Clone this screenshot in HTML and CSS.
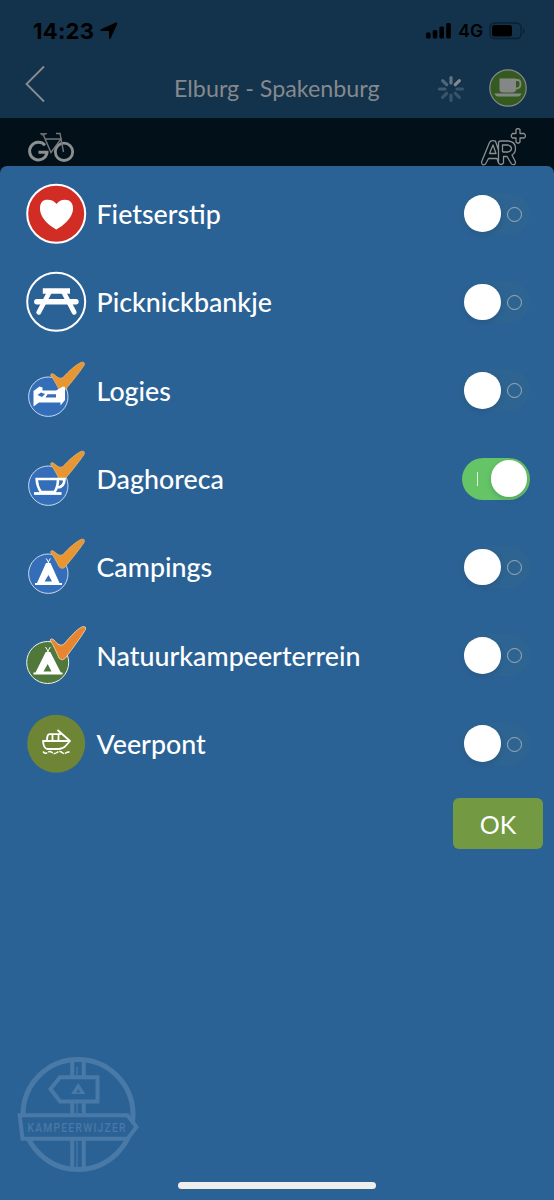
FILE: index.html
```
<!DOCTYPE html>
<html lang="nl">
<head>
<meta charset="utf-8">
<title>Elburg - Spakenburg</title>
<link rel="stylesheet" href="styles.css">
</head>
<body>
<div class="screen">
  <header class="header">
    <div class="status">
      <span class="time">14:23</span>
      <svg class="location" width="18" height="18" viewBox="0 0 18 18"><path d="M1 7.300 15.800.6Q18-.2 17.200 2L10.800 16Q9.400 18.400 9 15.700V9H2Q-.8 8.500 1 7.300Z"/></svg>
      <svg class="signal" width="26" height="16" viewBox="0 0 26 16"><rect y="9.500" width="4.600" height="6" rx="1.500"/><rect x="6.700" y="7" width="4.600" height="8.500" rx="1.500"/><rect x="13.400" y="3.500" width="4.600" height="12" rx="1.500"/><rect x="20.200" y="0" width="4.600" height="15.500" rx="1.500"/></svg>
      <span class="network">4G</span>
      <svg class="battery" width="36" height="18" viewBox="0 0 36 18"><rect x="1" y="1" width="31" height="15.500" rx="4.500" fill="none" stroke="#0a2031" stroke-width="1.300"/><rect x="3" y="3" width="20" height="11.500" rx="2.500"/><path d="M34 6v6q3-3 0-6" fill="#0a2031"/></svg>
    </div>
    <div class="nav">
      <svg class="back" width="22" height="40" viewBox="0 0 22 40"><path d="M20 2.500 2.500 20 20 37.500" fill="none" stroke="#8b8d8f" stroke-width="1.800"/></svg>
      <h1 class="title">Elburg - Spakenburg</h1>
      <svg class="spinner" width="28" height="28" viewBox="-14 -14 28 28" stroke-width="3.200" stroke-linecap="round">
        <path d="M0-6V-11.500" stroke="#627582"/><path d="M4.300-4.300 8.400-8.400" stroke="#84898e"/><path d="M6 0H11.500" stroke="#38536a"/><path d="M4.300 4.300 8.400 8.400" stroke="#38536a"/><path d="M0 6V11.500" stroke="#38536a"/><path d="M-4.300 4.300-8.400 8.400" stroke="#38536a"/><path d="M-6 0H-11.500" stroke="#405b6e"/><path d="M-4.300-4.300-8.400-8.400" stroke="#4f6878"/>
      </svg>
      <svg class="cup" width="38" height="38" viewBox="0 0 38 38"><circle cx="19" cy="19" r="18.200" fill="#345a1f" stroke="#85898a" stroke-width="1.200"/><path d="M10.500 9.500H27V20Q27 23.500 23.500 23.500H14Q10.500 23.500 10.500 20Z" fill="#858787"/><path d="M26.500 11H28.500Q31.500 11 31.500 15T28 19.500H26.500" fill="none" stroke="#858787" stroke-width="1.800"/><path d="M5.500 24.500H32.500Q31.500 27.500 29 27.500H9Q6.500 27.500 5.500 24.500Z" fill="#858787"/></svg>
    </div>
  </header>
  <div class="toolbar">
    <svg width="48" height="36" viewBox="27 128 48 36" fill="none" stroke="#8c8f90">
      <path d="M45 145.300A8.800 8.800 0 1 0 47 153V152.200H38.500" stroke-width="3"/><circle cx="64" cy="151.800" r="8.700" stroke-width="2.800"/>
      <path d="M43 134 51 152.500 61 139H45M60 133 61 139 63.500 152M56 133.500H60.500" stroke="#74787a" stroke-width="1.400"/><path d="M40.500 133.500H47L44 135H41.500Z" fill="#66696a" stroke="#66696a"/>
    </svg>
    <svg width="46" height="40" viewBox="480 128 46 40" fill="none" stroke="#8c8f90" stroke-width="1.300" stroke-linejoin="round">
      <path d="M481.500 162 489.500 142.500Q491 139.500 495.500 141.200L498.500 150V143Q498.500 141 500.500 141H508Q515.500 141.500 515.500 148.500Q515.500 153 512 155L515.500 162Q515.500 166 511.500 164L507 156.500H503.500V163Q501 166 498.500 163L497 158.500H488.500L485.500 164Q482 166.500 481.500 162Z"/>
      <path d="M489.500 153.500H496L493 145ZM498.500 150V162M502.500 152V145H508Q511.500 146 511.500 148.500T508 152H502.500"/>
      <path d="M516 129.500Q518 127.500 520 129.500V133.500H524Q527 136 524 138H520V142Q518 144.500 516 142V138H512.500Q510 136 512.500 133.500H516Z"/>
    </svg>
  </div>
  <main class="sheet">
    <ul class="list">
      <li class="row">
        <svg class="icon" viewBox="25 0 64 88"><circle cx="56.200" cy="43.700" r="29" fill="#d12d25" stroke="#fff" stroke-width="2"/><path d="M56.300 59.500C52 57 40 49.500 40 38.500 40 32 43 29.700 47.500 29.700Q53.500 29.700 56.500 34Q59.500 29.700 65 29.700C70 29.700 73 32.500 73 38.500 73 49 61 57 56.300 59.500Z" fill="#fff"/></svg>
        <span class="label">Fietserstip</span><span class="switch"></span>
      </li>
      <li class="row">
        <svg class="icon" viewBox="25 0 64 88"><circle cx="56.200" cy="43.700" r="29" fill="none" stroke="#fff" stroke-width="2"/><g fill="none" stroke="#fff"><path d="M42.800 33H70" stroke-width="5.500"/><path d="M36.800 43.700H76" stroke-width="5.400" stroke-linecap="round"/><path d="M49.500 34 38.800 54.300M63.500 34 74.200 54.300" stroke-width="4.800" stroke-linecap="round"/></g></svg>
        <span class="label">Picknickbankje</span><span class="switch"></span>
      </li>
      <li class="row">
        <svg class="icon" viewBox="25 0 64 88"><circle cx="48.300" cy="50.700" r="19.700" fill="#356eb8" stroke="#d8e4f3" stroke-width=".9"/><path class="check" d="M50.500 29Q51.500 26.500 54 28.500C57 31 60 33.500 63 31.500 69 25 76 18.500 81.500 16.300Q85.500 15.500 84 19.500C79 27 72.500 35 65 44Q62 46.800 59 43.500C56 37.500 54 34 50.500 29Z"/><path d="M33.500 45 39.500 40.500 42.500 41.500V44.500H56L63 40.500 65 41V54L60.500 59.500V56.500H39L33.500 60.500Z" fill="#fff"/><path d="M37.500 49 41 46.500 45 48 42 51ZM47.500 48.300H56V51.500H45.500Z" fill="#356eb8"/></svg>
        <span class="label">Logies</span><span class="switch"></span>
      </li>
      <li class="row">
        <svg class="icon" viewBox="25 0 64 88"><circle cx="48.300" cy="50.700" r="19.700" fill="#356eb8" stroke="#d8e4f3" stroke-width=".9"/><path class="check" d="M50.500 29Q51.500 26.500 54 28.500C57 31 60 33.500 63 31.500 69 25 76 18.500 81.500 16.300Q85.500 15.500 84 19.500C79 27 72.500 35 65 44Q62 46.800 59 43.500C56 37.500 54 34 50.500 29Z"/><path d="M36.700 44H58Q58 52 54.500 57H41Q37 51.500 36.700 44ZM58 44H64.500Q64.500 52.500 57 52.500" fill="none" stroke="#fff" stroke-width="2.600"/><path d="M34 58.500H61.500" stroke="#fff" stroke-width="2.800"/></svg>
        <span class="label">Daghoreca</span><span class="switch on"></span>
      </li>
      <li class="row">
        <svg class="icon" viewBox="25 0 64 88"><circle cx="48.300" cy="50.700" r="19.700" fill="#356eb8" stroke="#d8e4f3" stroke-width=".9"/><path class="check" d="M50.500 29Q51.500 26.500 54 28.500C57 31 60 33.500 63 31.500 69 25 76 18.500 81.500 16.300Q85.500 15.500 84 19.500C79 27 72.500 35 65 44Q62 46.800 59 43.500C56 37.500 54 34 50.500 29Z"/><path d="M46 40H50.500L59.500 60H62V62H35V60H37ZM48.500 52 44.500 58.500H52Z" fill="#fff" fill-rule="evenodd"/><path d="M50.300 35.500 47 42M46.300 35.500 50 42" stroke="#fff" stroke-width="1"/></svg>
        <span class="label">Campings</span><span class="switch"></span>
      </li>
      <li class="row">
        <svg class="icon" viewBox="25 0 64 88"><circle cx="47.700" cy="51.500" r="21" fill="#50783a" stroke="#eef3ee" stroke-width="1"/><path class="check deep" d="M50 29Q51 26.500 54 29C57 32.500 60 36 64 33 71 25 77 18 82.500 15.700Q86.500 15 85.500 18.500C80.500 27 73.500 36 65.500 47Q62 50.500 59 47C56 40.500 54 35 50 29Z"/><path d="M45.700 41H50.300L60.800 61.500H62.500V63.500H33.500V61.500H35.500ZM47.700 53 43.500 60.500H51.500Z" fill="#fff" fill-rule="evenodd"/><path d="M50.300 36 46.500 42.500M45.500 36 49.500 42.500" stroke="#fff" stroke-width="1"/></svg>
        <span class="label">Natuurkampeerterrein</span><span class="switch"></span>
      </li>
      <li class="row">
        <svg class="icon" viewBox="25 0 64 88"><circle cx="56.200" cy="43.700" r="29" fill="#6e8535"/><g fill="none" stroke="#fff" stroke-width="1.800" stroke-linejoin="round"><path d="M43 41H70L66 45.500Q63 49 59 49H47Q43.500 48 43 41ZM46.800 40.500 47.500 36Q48 34.200 50 34.200H61M52.500 34.500V40.500M58.500 34.500V40.500M57.500 30 70 41"/><path d="M43 51.500Q45 54.500 47.500 52.500T52 52.500T57 52.500T62 52.500T66.500 52.500L70.500 51.500" stroke-width="1.500" stroke-dasharray="5 1"/></g></svg>
        <span class="label">Veerpont</span><span class="switch"></span>
      </li>
    </ul>
    <button class="ok">OK</button>
    <footer class="footer">
      <svg class="logo" width="124" height="118" viewBox="16 1056 124 118" fill="none" stroke="#4879a7">
        <circle cx="78" cy="1114.500" r="55" stroke-width="5"/>
        <path d="M72.200 1060V1169M83.800 1060V1169" stroke-width="4"/><path d="M77 1067V1168" stroke-width="1.300"/>
        <path d="M60 1077.200H97.500V1101.500H60L50.500 1089Z" fill="#2b6295" stroke-width="4"/><path d="M71 1094 78.200 1083 85.500 1094ZM76.500 1092.500H80L78.200 1089Z" fill="#4879a7" fill-rule="evenodd" stroke="none"/>
        <path d="M19.700 1115.200H127.500L136.500 1127 127.500 1138.800H22.500Z" fill="#2b6295" stroke-width="4"/>
        <text class="logo-text" transform="translate(27.500 1131.700) scale(.76 1)" textLength="129" lengthAdjust="spacing">KAMPEERWIJZER</text>
      </svg>
      <div class="home"></div>
    </footer>
  </main>
</div>
</body>
</html>
```

FILE: styles.css
```
* { box-sizing: border-box; }
body { margin: 0; background: #02101a; font-family: Lato, "Open Sans", sans-serif; }
svg { display: block; flex: none; }
.screen { width: 554px; height: 1200px; display: flex; flex-direction: column; overflow: hidden; }
.header { height: 118px; background: #13324b; }
.status { height: 60px; padding: 1px 29px 0 33px; display: flex; align-items: center; }
.time { width: 61px; font: 700 22px Inter, sans-serif; letter-spacing: .3px; white-space: nowrap; }
.location { margin-left: 6px; }
.signal { margin-left: auto; }
.network { margin: 0 6px 0 6px; font: 600 17.500px Inter, sans-serif; }
.nav { height: 58px; padding: 0 27px 0 24px; display: flex; align-items: center; }
.back { margin-top: -10px; }
.title { width: 208px; margin: -2px 0 0 128px; font-size: 23.300px; font-weight: 400; color: #85898d; white-space: nowrap; }
.spinner { margin: -1px 0 0 55px; }
.cup { margin: -2px 0 0 auto; }
.toolbar { height: 48px; padding: 10px 28px 0 27px; display: flex; justify-content: space-between; background: #02101a; }
.sheet { flex: 1; display: flex; flex-direction: column; background: #2b6295; border-radius: 7px 7px 0 0; }
.list { margin: 0; padding: 3.400px 24.500px 0 25px; list-style: none; }
.row { height: 88.350px; display: flex; align-items: center; }
.icon { width: 64px; height: 88px; }
.check { fill: #e79632; stroke: #dfb37d; stroke-width: .8; }
.check.deep { fill: #e88630; stroke: #f3d9c0; }
.label { margin-left: 7.500px; padding-top: 1px; font-size: 26.800px; font-weight: 500; color: #fff; white-space: nowrap; }
.switch { width: 68px; height: 42px; margin-left: auto; padding: 2px 9px 0 2.500px; border-radius: 21px; background: #2e6491; display: flex; align-items: center; justify-content: space-between; }
.switch::before { content: ""; width: 36.500px; height: 36.500px; margin-top: -2px; border-radius: 50%; background: #fff; box-shadow: 0 2px 5px #12345638; }
.switch::after { content: ""; width: 13px; height: 13px; margin: -1px 0 0; border: 1.500px solid #a2adb4; border-radius: 50%; }
.switch:not(.on) { padding-right: 8px; }
.switch.on { flex-direction: row-reverse; padding: 2px 2.500px 0 15px; background: #65c466; }
.switch.on::after { width: 1.500px; height: 14px; border: 0; border-radius: 0; background: #e5f5e5; }
.ok { width: 90px; height: 51px; margin: 10.600px 11px 0 auto; padding: 0; border: 0; border-radius: 6px; background: #739942; color: #fff; font: 400 25px Lato, sans-serif; }
.footer { margin-top: auto; height: 144px; padding-left: 16px; display: flex; flex-direction: column; }
.logo-text { font: 500 13.500px Roboto, sans-serif; fill: #4879a7; stroke: none; }
.home { width: 198px; height: 7px; margin: 8px 0 0 162px; border-radius: 4px; background: #eee; }
```
